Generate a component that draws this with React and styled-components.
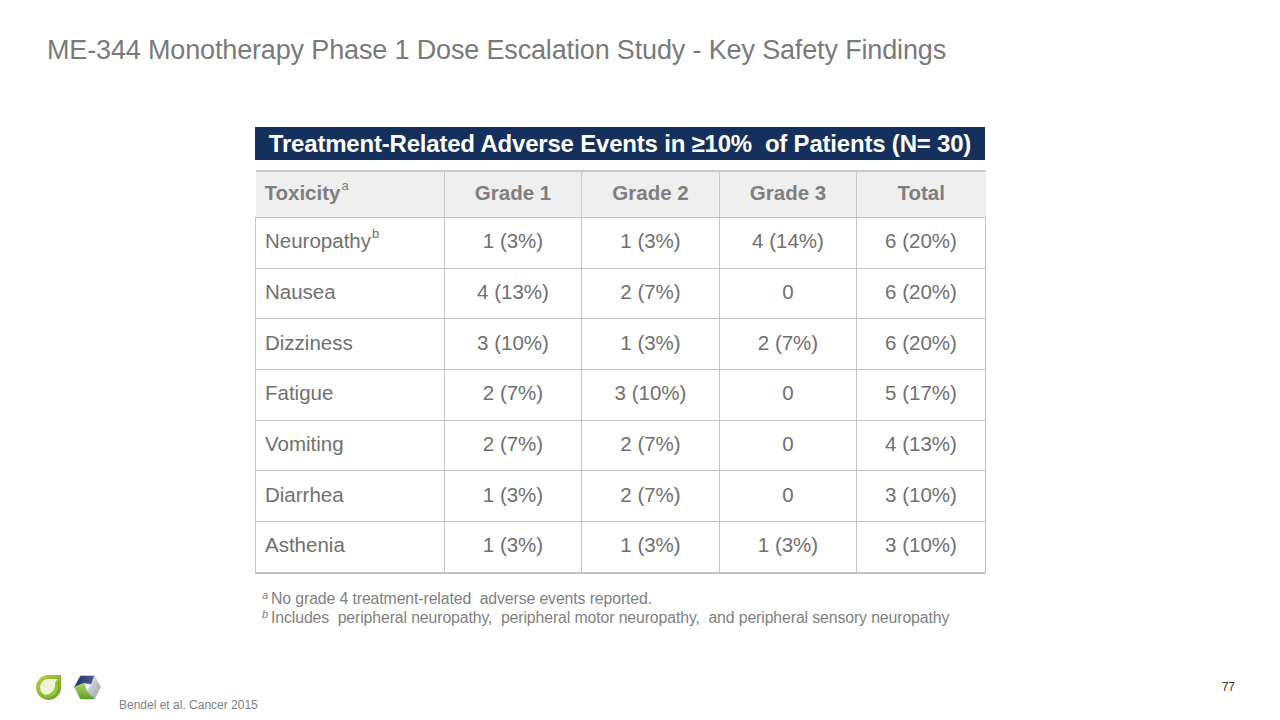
import React from 'react';
import styled, { createGlobalStyle } from 'styled-components';

const GlobalStyle = createGlobalStyle`
  html, body {
    margin: 0;
    padding: 0;
    background: #ffffff;
  }
  body {
    font-family: 'Liberation Sans', Arial, sans-serif;
  }
`;

const rows = [
  { name: 'Neuropathy', sup: 'b', g1: '1 (3%)', g2: '1 (3%)', g3: '4 (14%)', total: '6 (20%)' },
  { name: 'Nausea', g1: '4 (13%)', g2: '2 (7%)', g3: '0', total: '6 (20%)' },
  { name: 'Dizziness', g1: '3 (10%)', g2: '1 (3%)', g3: '2 (7%)', total: '6 (20%)' },
  { name: 'Fatigue', g1: '2 (7%)', g2: '3 (10%)', g3: '0', total: '5 (17%)' },
  { name: 'Vomiting', g1: '2 (7%)', g2: '2 (7%)', g3: '0', total: '4 (13%)' },
  { name: 'Diarrhea', g1: '1 (3%)', g2: '2 (7%)', g3: '0', total: '3 (10%)' },
  { name: 'Asthenia', g1: '1 (3%)', g2: '1 (3%)', g3: '1 (3%)', total: '3 (10%)' },
];

const Slide = styled.div`
  width: 1280px;
  height: 720px;
  position: relative;
  overflow: hidden;
  display: flex;
  flex-direction: column;
  box-sizing: border-box;
`;

const Title = styled.h1`
  margin: 35px 0 0 47px;
  font-size: 27px;
  font-weight: 400;
  line-height: 31px;
  color: #7a7a7a;
  letter-spacing: -0.15px;
`;

const Content = styled.div`
  margin: 61px 0 0 255px;
  width: 730px;
  display: flex;
  flex-direction: column;
`;

const Banner = styled.div`
  height: 33px;
  background: #15305c;
  color: #ffffff;
  font-weight: 700;
  font-size: 24px;
  line-height: 34px;
  text-align: center;
  white-space: nowrap;
  letter-spacing: -0.2px;
`;

const Table = styled.table`
  margin-top: 10px;
  width: 730px;
  border-collapse: collapse;
  table-layout: fixed;
  border-top: 2px solid #c9c9c9;
  border-bottom: 2px solid #c4c4c4;
`;

const HeadCell = styled.th`
  height: 42px;
  background: #efefef;
  color: #7f7f7f;
  font-size: 20.5px;
  font-weight: 700;
  text-align: ${p => (p.$left ? 'left' : 'center')};
  padding: 0 0 3px ${p => (p.$left ? '9px' : '0')};
  border-left: ${p => (p.$first ? '0' : '1px solid #c8c8c8')};
  border-bottom: 1px solid #c4c4c4;
`;

const Cell = styled.td`
  height: 46.7px;
  color: #707070;
  font-size: 20.5px;
  text-align: ${p => (p.$left ? 'left' : 'center')};
  padding: 0 0 3px ${p => (p.$left ? '9px' : '0')};
  border-left: 1px solid #c4c4c4;
  border-right: ${p => (p.$last ? '1px solid #c4c4c4' : '0')};
  border-bottom: 1px solid #c4c4c4;
`;

const Sup = styled.sup`
  font-size: 13px;
  font-weight: 400;
  vertical-align: 10px;
  line-height: 0;
  margin-left: 1px;
`;

const Notes = styled.div`
  margin: 17px 0 0 7px;
  display: flex;
  flex-direction: column;
  gap: 3px;
  color: #7f7f7f;
  font-size: 15.8px;
  line-height: 16px;
  letter-spacing: -0.1px;
`;

const NoteMark = styled.i`
  font-size: 11px;
  vertical-align: 5px;
  line-height: 0;
  margin-right: 3px;
`;

const Footer = styled.div`
  position: absolute;
  left: 36px;
  bottom: 8px;
  display: flex;
  align-items: flex-end;
  gap: 13px;
`;

const Logos = styled.div`
  display: flex;
  gap: 12px;
  margin-bottom: 12px;
`;

const Citation = styled.span`
  margin-left: 4px;
  font-size: 12px;
  color: #7f7f7f;
`;

const PageNum = styled.span`
  position: absolute;
  right: 45px;
  top: 680px;
  font-size: 12px;
  color: #333333;
`;

const LeafLogo = () => (
  <svg width="25" height="25" viewBox="0 0 25 25">
    <defs>
      <linearGradient id="leafG" x1="0" y1="0" x2="1" y2="1">
        <stop offset="0" stopColor="#b5d44a" />
        <stop offset="1" stopColor="#6b9e1f" />
      </linearGradient>
      <linearGradient id="leafI" x1="0" y1="0" x2="1" y2="1">
        <stop offset="0" stopColor="#8fbf2e" />
        <stop offset="1" stopColor="#9cc63a" />
      </linearGradient>
    </defs>
    <path d="M25 0 L25 12.5 A12.5 12.5 0 0 1 12.5 25 A12.5 12.5 0 0 1 0 12.5 A12.5 12.5 0 0 1 12.5 0 Z" fill="url(#leafG)" />
    <path d="M21 4 L21 12.5 A8.5 8.5 0 0 1 12.5 21 A8.5 8.5 0 0 1 4 12.5 A8.5 8.5 0 0 1 12.5 4 Z" fill="#eef5d6" />
    <path d="M22 3 L22 12.5 A9.5 9.5 0 0 1 12.5 22 A9.5 9.5 0 0 1 5.5 19 A10 10 0 0 0 19 8 L22 3 Z" fill="url(#leafI)" />
  </svg>
);

const HexLogo = () => (
  <svg width="29" height="25" viewBox="0 0 28 25">
    <defs>
      <linearGradient id="hexN" x1="0" y1="0" x2="1" y2="0">
        <stop offset="0" stopColor="#1f2f63" />
        <stop offset="1" stopColor="#4d6296" />
      </linearGradient>
      <linearGradient id="hexG" x1="0" y1="0" x2="0" y2="1">
        <stop offset="0" stopColor="#a8d865" />
        <stop offset="1" stopColor="#5f9e2a" />
      </linearGradient>
      <linearGradient id="hexS" x1="0" y1="0" x2="1" y2="1">
        <stop offset="0" stopColor="#eceef1" />
        <stop offset="1" stopColor="#969ca6" />
      </linearGradient>
    </defs>
    <polygon points="1,12 7,1 21,1 18,9 11,8" fill="url(#hexN)" stroke="url(#hexN)" strokeWidth="0.6" strokeLinejoin="round" />
    <polygon points="21,1 27,12 21,24 13,16 18,9" fill="url(#hexS)" stroke="url(#hexS)" strokeWidth="0.6" strokeLinejoin="round" />
    <polygon points="21,24 7,24 1,12 11,8 13,16" fill="url(#hexG)" stroke="url(#hexG)" strokeWidth="0.6" strokeLinejoin="round" />
  </svg>
);

export default function App() {
  return (
    <>
      <GlobalStyle />
      <Slide>
        <Title>ME-344 Monotherapy Phase 1 Dose Escalation Study - Key Safety Findings</Title>
        <Content>
          <Banner>Treatment-Related Adverse Events in ≥10%&nbsp; of Patients (N= 30)</Banner>
          <Table>
            <colgroup>
              <col style={{ width: 189 }} />
              <col style={{ width: 137 }} />
              <col style={{ width: 138 }} />
              <col style={{ width: 137 }} />
              <col style={{ width: 129 }} />
            </colgroup>
            <thead>
              <tr>
                <HeadCell $left $first>Toxicity<Sup>a</Sup></HeadCell>
                <HeadCell>Grade 1</HeadCell>
                <HeadCell>Grade 2</HeadCell>
                <HeadCell>Grade 3</HeadCell>
                <HeadCell>Total</HeadCell>
              </tr>
            </thead>
            <tbody>
              {rows.map(r => (
                <tr key={r.name}>
                  <Cell $left>{r.name}{r.sup && <Sup>{r.sup}</Sup>}</Cell>
                  <Cell>{r.g1}</Cell>
                  <Cell>{r.g2}</Cell>
                  <Cell>{r.g3}</Cell>
                  <Cell $last>{r.total}</Cell>
                </tr>
              ))}
            </tbody>
          </Table>
          <Notes>
            <span><NoteMark>a</NoteMark>No grade 4 treatment-related&nbsp; adverse events reported.</span>
            <span><NoteMark>b</NoteMark>Includes&nbsp; peripheral neuropathy,&nbsp; peripheral motor neuropathy,&nbsp; and peripheral sensory neuropathy</span>
          </Notes>
        </Content>
        <Footer>
          <Logos>
            <LeafLogo />
            <HexLogo />
          </Logos>
          <Citation>Bendel et al. Cancer 2015</Citation>
        </Footer>
        <PageNum>77</PageNum>
      </Slide>
    </>
  );
}
